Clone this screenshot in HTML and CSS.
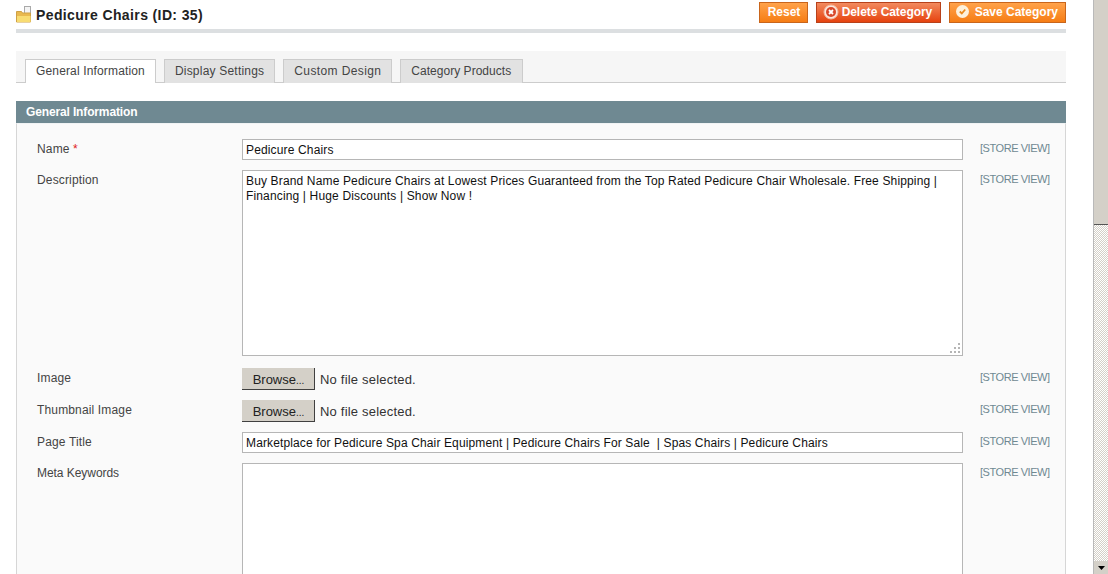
FILE: index.html
```html
<!DOCTYPE html>
<html lang="en">
<head>
<meta charset="utf-8">
<title>Pedicure Chairs (ID: 35)</title>
<link rel="stylesheet" href="styles.css">
</head>
<body>
<div class="window">
  <main class="page">
    <header class="head">
      <h1 class="title">
        <svg class="folder" width="17" height="17" viewBox="0 0 17 17">
          <rect x="8.500" y="0.500" width="6" height="9" fill="#f4f4f4" stroke="#a9a9a9"/>
          <path d="M0.500 5.500h5l1 1.500h8v9H0.500z" fill="#e9b94f" stroke="#cfa146"/>
          <path d="M1 10h13.500v6H1z" fill="#f8dc72"/>
        </svg>
        Pedicure Chairs (ID: 35)
      </h1>
      <div class="actions">
        <button class="btn btn-reset" type="button">Reset</button>
        <button class="btn btn-delete" type="button">
          <svg class="btn-icon" width="16" height="16" viewBox="0 0 16 16">
            <circle cx="8" cy="8" r="7" fill="#fbe6dc" stroke="#f6b79c"/>
            <circle cx="8" cy="8" r="5" fill="#d9482a"/>
            <path d="M6 6l4 4M10 6l-4 4" stroke="#fff" stroke-width="1.800"/>
          </svg>
          Delete Category
        </button>
        <button class="btn btn-save" type="button">
          <svg class="btn-icon" width="13" height="13" viewBox="0 0 13 13">
            <circle cx="6.500" cy="6.500" r="6.500" fill="#fdf1dc"/>
            <path d="M3.800 6.500l2 2 3.400-4" fill="none" stroke="#e98a1e" stroke-width="1.800"/>
          </svg>
          Save Category
        </button>
      </div>
    </header>

    <nav class="tabs">
      <a class="tab tab-active">General Information</a>
      <a class="tab tab-display">Display Settings</a>
      <a class="tab tab-custom">Custom Design</a>
      <a class="tab tab-products">Category Products</a>
    </nav>

    <h2 class="section-head">General Information</h2>
    <section class="fieldset">
      <div class="row">
        <label class="label">Name <span class="req">*</span></label>
        <input class="text" type="text" value="Pedicure Chairs">
        <span class="scope">[STORE VIEW]</span>
      </div>
      <div class="row row-desc">
        <label class="label">Description</label>
        <div class="area-wrap">
          <textarea class="area area-desc">Buy Brand Name Pedicure Chairs at Lowest Prices Guaranteed from the Top Rated Pedicure Chair Wholesale. Free Shipping | Financing | Huge Discounts | Show Now !</textarea>
          <svg class="grip" width="12" height="12" viewBox="0 0 12 12" fill="#b5b5b5">
            <rect x="9" y="1" width="2" height="2"/><rect x="5" y="5" width="2" height="2"/><rect x="9" y="5" width="2" height="2"/><rect x="1" y="9" width="2" height="2"/><rect x="5" y="9" width="2" height="2"/><rect x="9" y="9" width="2" height="2"/>
          </svg>
        </div>
        <span class="scope">[STORE VIEW]</span>
      </div>
      <div class="row">
        <label class="label">Image</label>
        <div class="file"><span class="browse">Browse<span class="dots">...</span></span><span class="file-name">No file selected.</span></div>
        <span class="scope">[STORE VIEW]</span>
      </div>
      <div class="row">
        <label class="label">Thumbnail Image</label>
        <div class="file"><span class="browse">Browse<span class="dots">...</span></span><span class="file-name">No file selected.</span></div>
        <span class="scope">[STORE VIEW]</span>
      </div>
      <div class="row">
        <label class="label">Page Title</label>
        <input class="text text-title" type="text" value="Marketplace for Pedicure Spa Chair Equipment | Pedicure Chairs For Sale  | Spas Chairs | Pedicure Chairs">
        <span class="scope">[STORE VIEW]</span>
      </div>
      <div class="row">
        <label class="label label-meta">Meta Keywords</label>
        <textarea class="area area-meta"></textarea>
        <span class="scope">[STORE VIEW]</span>
      </div>
    </section>
  </main>

  <aside class="scrollbar">
    <div class="thumb"></div>
    <div class="track"></div>
    <div class="arrow"><svg width="7" height="4" viewBox="0 0 7 4"><path d="M0 0h7L3.500 4z" fill="#000"/></svg></div>
  </aside>
</div>
</body>
</html>
```
FILE: styles.css
```css
* { box-sizing: border-box; }
html, body { margin: 0; height: 574px; overflow: hidden; background: #fff; }
body { font: 12px "Liberation Sans", Arial, sans-serif; color: #444; letter-spacing: .15px; }

.window { display: flex; height: 574px; overflow: hidden; }
.page { width: 1050px; margin-left: 16px; flex: none; height: 574px; overflow: hidden; }

.head { display: flex; justify-content: space-between; height: 33px; border-bottom: 4px solid #dcdfe1; }
.title { display: flex; align-items: center; gap: 3px; margin: 0; height: 29px; font-size: 14px; font-weight: bold; color: #222; letter-spacing: .38px; }
.actions { display: flex; gap: 8px; align-items: flex-start; padding-top: 2px; }
.btn { display: flex; align-items: center; height: 21px; padding: 0 8px 2px; border: 1px solid #c9651b; background: linear-gradient(#ffa24a, #f67d14); color: #fff; font: bold 12px "Liberation Sans", Arial, sans-serif; letter-spacing: 0; }
.btn-reset { padding-right: 7px; width: 49px; }
.btn-delete { width: 125px; border-color: #b8411a; background: linear-gradient(#f28a5e, #e6430f); padding: 0 6px 2px 6px; gap: 3px; letter-spacing: -.05px; }
.btn-save { gap: 6px; padding: 0 7px 2px 6px; }
.btn-icon { flex: none; }

.tabs { display: flex; gap: 8px; margin-top: 18px; height: 32px; padding: 8px 0 0 9px; background: #f6f6f6; border-bottom: 1px solid #ccc; }
.tab { height: 24px; padding: 4px 10px 0; background: #e2e2e2; border: 1px solid #ccc; border-bottom: 0; color: #444; }
.tab-active { background: #fff; position: relative; z-index: 1; }
.tab-display { letter-spacing: .21px; }
.tab-custom { letter-spacing: .38px; }
.tab-products { letter-spacing: .03px; padding-right: 11px; }

.section-head { margin: 18px 0 0; height: 22px; padding: 4px 10px 0; background: #6f8992; color: #fff; font-size: 12px; font-weight: bold; letter-spacing: -.14px; }
.fieldset { padding: 15px 0 0 20px; height: 460px; background: #fafafa; border: 1px solid #d6d6d6; border-top: 1px solid #f0f3f4; }

.row { display: grid; grid-template-columns: 205px 721px auto; margin-bottom: 10px; }
.row-desc { margin-bottom: 12px; }
.label { padding-top: 3px; color: #444; }
.label-meta { letter-spacing: -.05px; }
.req { color: #e02020; }
.scope { padding: 3px 0 0 17px; color: #6f8992; font-size: 11px; letter-spacing: -.45px; white-space: nowrap; }
.text { width: 721px; height: 21px; padding: 0 3px; border: 1px solid #b6b6b6; background: #fff; font: 12px "Liberation Sans", Arial, sans-serif; letter-spacing: .15px; color: #111; }
.text-title { letter-spacing: .13px; }
.area-wrap { position: relative; height: 186px; }
.area { display: block; width: 721px; padding: 3px 3px; border: 1px solid #b6b6b6; background: #fff; font: 12px/15px "Liberation Sans", Arial, sans-serif; letter-spacing: .15px; color: #111; resize: none; }
.area-desc { height: 186px; }
.area-meta { height: 200px; }
.grip { position: absolute; right: 2px; bottom: 2px; }

.file { display: flex; align-items: center; gap: 5px; height: 22px; }
.browse { width: 73px; height: 22px; padding: 4px 0 0 1px; background: #d4d0c8; border-right: 1px solid #404040; border-bottom: 1px solid #404040; text-align: center; color: #222; font-size: 13px; letter-spacing: 0; }
.dots { font-size: 10px; }
.file-name { font-size: 13px; color: #333; letter-spacing: .2px; }

.scrollbar { display: flex; flex-direction: column; width: 15px; height: 574px; margin-left: 27px; flex: none; border-left: 1px solid #b9b9b9; }
.thumb { height: 225px; flex: none; background: #d4d0c8; border-bottom: 1px solid #555; }
.track { flex: 1; background: conic-gradient(#fff 25%, #d4d0c8 0 50%, #fff 0 75%, #d4d0c8 0) 0 0 / 2px 2px; }
.arrow { display: flex; align-items: center; justify-content: center; height: 13px; flex: none; background: #d4d0c8; }
```
